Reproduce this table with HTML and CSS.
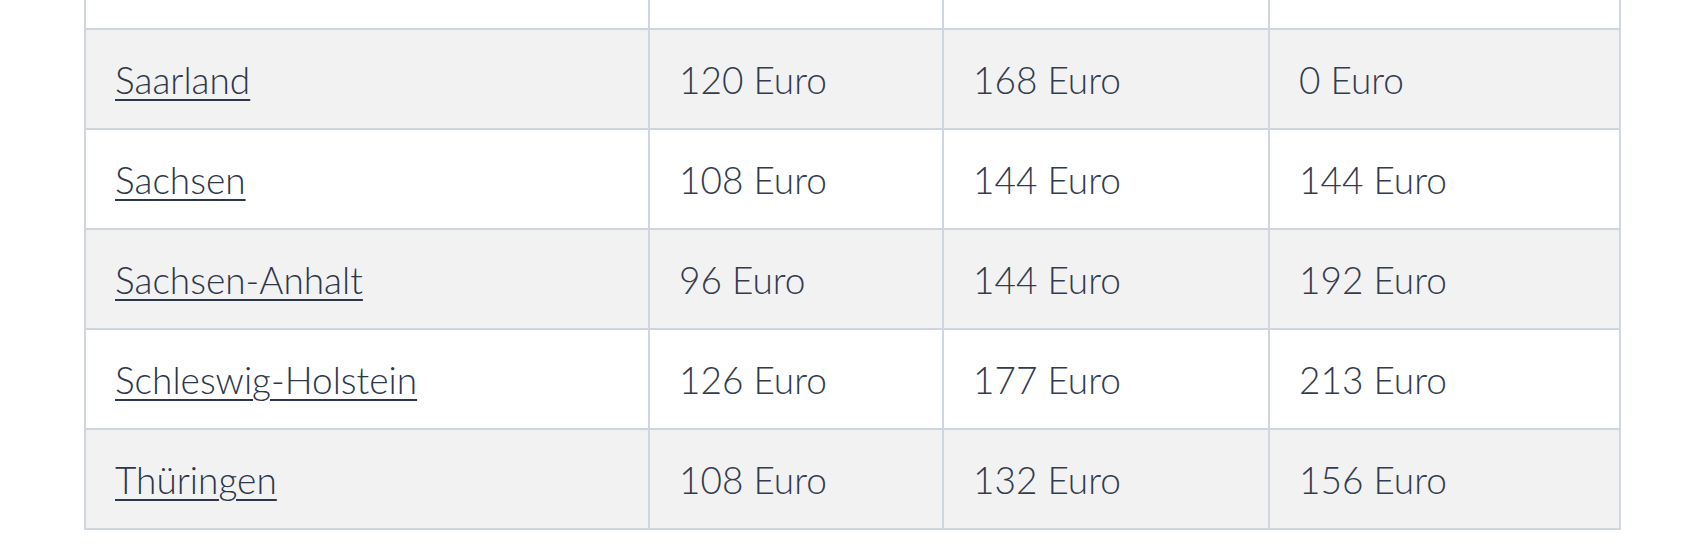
FILE: index.html
```html
<!DOCTYPE html>
<html lang="de">
<head>
<meta charset="utf-8">
<title>Tabelle</title>
<link rel="stylesheet" href="styles.css">
</head>
<body>
<div class="wrap">
<table class="fees">
<colgroup>
<col class="c1"><col class="c2"><col class="c3"><col class="c4">
</colgroup>
<tbody>
<tr class="cut"><td></td><td></td><td></td><td></td></tr>
<tr class="odd"><td><a href="#">Saarland</a></td><td>120 Euro</td><td>168 Euro</td><td>0 Euro</td></tr>
<tr><td><a href="#">Sachsen</a></td><td>108 Euro</td><td>144 Euro</td><td>144 Euro</td></tr>
<tr class="odd"><td><a href="#">Sachsen-Anhalt</a></td><td>96 Euro</td><td>144 Euro</td><td>192 Euro</td></tr>
<tr><td><a href="#">Schleswig-Holstein</a></td><td>126 Euro</td><td>177 Euro</td><td>213 Euro</td></tr>
<tr class="odd"><td><a href="#">Thüringen</a></td><td>108 Euro</td><td>132 Euro</td><td>156 Euro</td></tr>
</tbody>
</table>
</div>
</body>
</html>
```

FILE: styles.css
```css
html, body {
  margin: 0;
  padding: 0;
  background: #ffffff;
}
.wrap {
  padding-left: 84px;
}
.fees {
  border-collapse: collapse;
  table-layout: fixed;
  width: 1535px;
  font-family: Lato, "Liberation Sans", sans-serif;
  font-weight: 300;
  font-size: 37px;
  color: #323c4e;
  margin-top: -72px;
}
.c1 { width: 564px; }
.c2 { width: 294px; }
.c3 { width: 326px; }
.c4 { width: 351px; }
.fees td {
  border: 2px solid #cfd6df;
  height: 98px;
  padding: 0 0 0 29px;
  vertical-align: middle;
  line-height: 1;
  white-space: nowrap;
}
.fees tr.odd td {
  background: #f2f2f2;
}
.fees a {
  color: #2c374b;
  text-decoration: underline;
  text-decoration-thickness: 2px;
  text-underline-offset: 5px;
}
```
